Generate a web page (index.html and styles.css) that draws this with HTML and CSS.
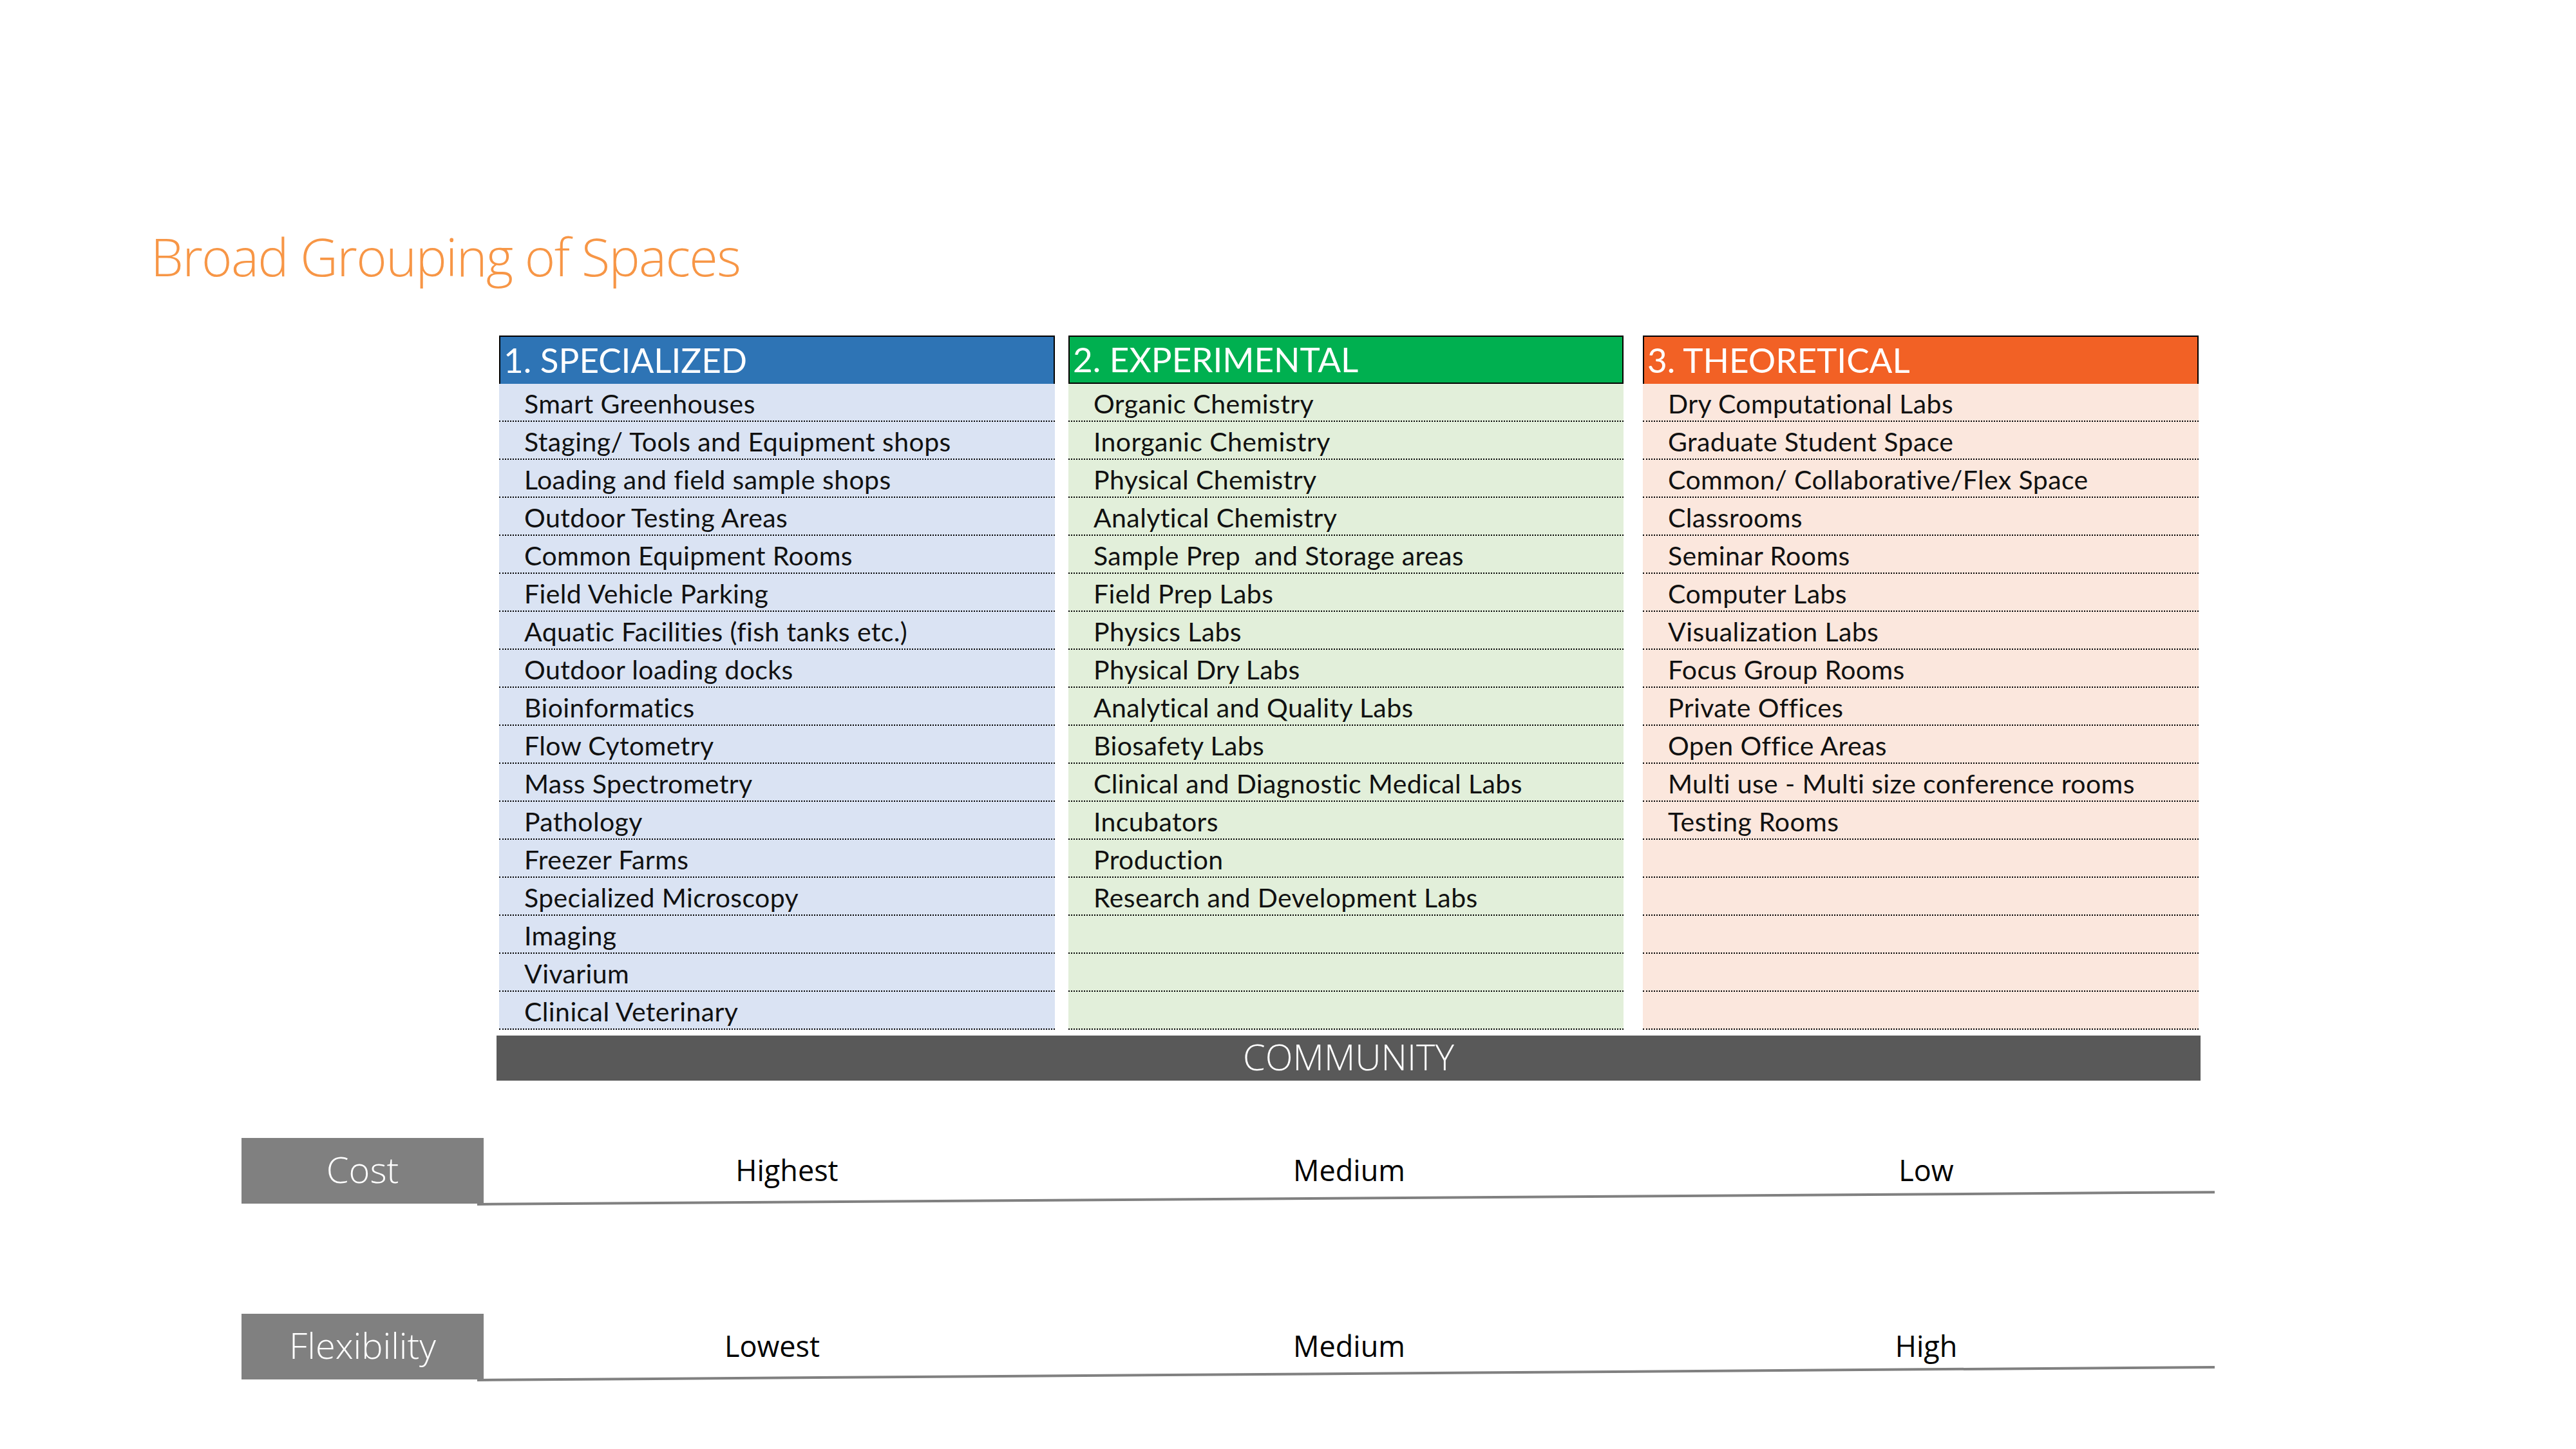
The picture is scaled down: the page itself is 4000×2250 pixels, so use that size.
FILE: index.html
```html
<!DOCTYPE html>
<html lang="en">
<head>
<meta charset="utf-8">
<title>Broad Grouping of Spaces</title>
<link rel="stylesheet" href="styles.css">
</head>
<body>
<div class="slide">
  <h1 class="title">Broad Grouping of Spaces</h1>
  <div class="groups">
    <section class="group group-spec">
      <div class="group-head">1. SPECIALIZED</div>
      <ul class="group-list">
        <li>Smart Greenhouses</li>
        <li>Staging/ Tools and Equipment shops</li>
        <li>Loading and field sample shops</li>
        <li>Outdoor Testing Areas</li>
        <li>Common Equipment Rooms</li>
        <li>Field Vehicle Parking</li>
        <li>Aquatic Facilities (fish tanks etc.)</li>
        <li>Outdoor loading docks</li>
        <li>Bioinformatics</li>
        <li>Flow Cytometry</li>
        <li>Mass Spectrometry</li>
        <li>Pathology</li>
        <li>Freezer Farms</li>
        <li>Specialized Microscopy</li>
        <li>Imaging</li>
        <li>Vivarium</li>
        <li>Clinical Veterinary</li>
      </ul>
    </section>
    <section class="group group-exp">
      <div class="group-head">2. EXPERIMENTAL</div>
      <ul class="group-list">
        <li>Organic Chemistry</li>
        <li>Inorganic Chemistry</li>
        <li>Physical Chemistry</li>
        <li>Analytical Chemistry</li>
        <li>Sample Prep  and Storage areas</li>
        <li>Field Prep Labs</li>
        <li>Physics Labs</li>
        <li>Physical Dry Labs</li>
        <li>Analytical and Quality Labs</li>
        <li>Biosafety Labs</li>
        <li>Clinical and Diagnostic Medical Labs</li>
        <li>Incubators</li>
        <li>Production</li>
        <li>Research and Development Labs</li>
        <li></li>
        <li></li>
        <li></li>
      </ul>
    </section>
    <section class="group group-theo">
      <div class="group-head">3. THEORETICAL</div>
      <ul class="group-list">
        <li>Dry Computational Labs</li>
        <li>Graduate Student Space</li>
        <li>Common/ Collaborative/Flex Space</li>
        <li>Classrooms</li>
        <li>Seminar Rooms</li>
        <li>Computer Labs</li>
        <li>Visualization Labs</li>
        <li>Focus Group Rooms</li>
        <li>Private Offices</li>
        <li>Open Office Areas</li>
        <li>Multi use - Multi size conference rooms</li>
        <li>Testing Rooms</li>
        <li></li>
        <li></li>
        <li></li>
        <li></li>
        <li></li>
      </ul>
    </section>
  </div>
  <div class="community">COMMUNITY</div>
  <div class="metric metric-cost">
    <div class="metric-label">Cost</div>
    <div class="metric-values">
      <span class="metric-value metric-value-shift">Highest</span>
      <span class="metric-value">Medium</span>
      <span class="metric-value">Low</span>
    </div>
  </div>
  <div class="metric metric-flex">
    <div class="metric-label">Flexibility</div>
    <div class="metric-values">
      <span class="metric-value">Lowest</span>
      <span class="metric-value">Medium</span>
      <span class="metric-value">High</span>
    </div>
  </div>
</div>
</body>
</html>
```
FILE: styles.css
```css
html, body {
  margin: 0;
  padding: 0;
  background: #ffffff;
}

.slide {
  width: 4000px;
  height: 2250px;
  box-sizing: border-box;
  padding-top: 357px;
  overflow: hidden;
}

.title {
  margin: 0 0 0 234px;
  height: 82px;
  font-family: "Open Sans", sans-serif;
  font-weight: 300;
  font-size: 81px;
  line-height: 82px;
  letter-spacing: -1.6px;
  color: #f79646;
  white-space: nowrap;
}

.groups {
  display: flex;
  margin: 82px 0 0 775px;
}

.group {
  width: 863px;
  flex: none;
}

.group-exp {
  width: 862px;
  margin-left: 21px;
}

.group-theo {
  margin-left: 30px;
}

.group-head {
  height: 75px;
  box-sizing: border-box;
  border: 2px solid #000000;
  border-bottom: 0;
  padding-left: 5px;
  font-family: Lato, sans-serif;
  font-size: 53px;
  line-height: 72px;
  color: #ffffff;
  white-space: nowrap;
}

.group-spec .group-head { background: #2e74b5; }
.group-exp .group-head { background: #00b050; border-bottom: 2px solid #000000; line-height: 70px; }
.group-theo .group-head { background: #f26125; }

.group-list {
  list-style: none;
  margin: 0;
  padding: 0;
}

.group-list li {
  height: 59px;
  box-sizing: border-box;
  border-bottom: 2px dotted #000000;
  padding: 4px 0 0 39px;
  font-family: Lato, sans-serif;
  font-size: 41px;
  line-height: 53px;
  letter-spacing: 0.4px;
  color: #111111;
  white-space: pre;
}

.group-spec .group-list li { background: #dae3f3; }
.group-exp .group-list li { background: #e2efda; }
.group-theo .group-list li { background: #fbe7dd; }

.community {
  margin: 9px 0 0 771px;
  width: 2646px;
  height: 70px;
  background: #595959;
  color: #ffffff;
  text-align: center;
  font-family: "Open Sans", sans-serif;
  font-weight: 300;
  font-size: 56px;
  line-height: 64px;
}

.metric {
  position: relative;
  display: grid;
  grid-template-columns: 376px 2688px;
  margin-left: 375px;
  height: 102px;
}

.metric-cost {
  margin-top: 89px;
}

.metric-flex {
  margin-top: 171px;
}

.metric::after {
  content: "";
  position: absolute;
  left: 366px;
  top: 101px;
  width: 2698px;
  height: 4px;
  background: #808080;
  transform-origin: 0 50%;
  transform: rotate(-0.4deg);
}

.metric-flex::after {
  transform: rotate(-0.425deg);
}

.metric-label {
  background: #808080;
  color: #ffffff;
  text-align: center;
  font-family: "Open Sans", sans-serif;
  font-weight: 300;
  font-size: 56px;
  line-height: 96px;
}

.metric-values {
  display: grid;
  grid-template-columns: repeat(3, 1fr);
  text-align: center;
  font-family: "Open Sans", sans-serif;
  font-weight: 400;
  font-size: 45px;
  line-height: 99px;
  color: #000000;
}

.metric-value-shift {
  padding-left: 46px;
}
```
